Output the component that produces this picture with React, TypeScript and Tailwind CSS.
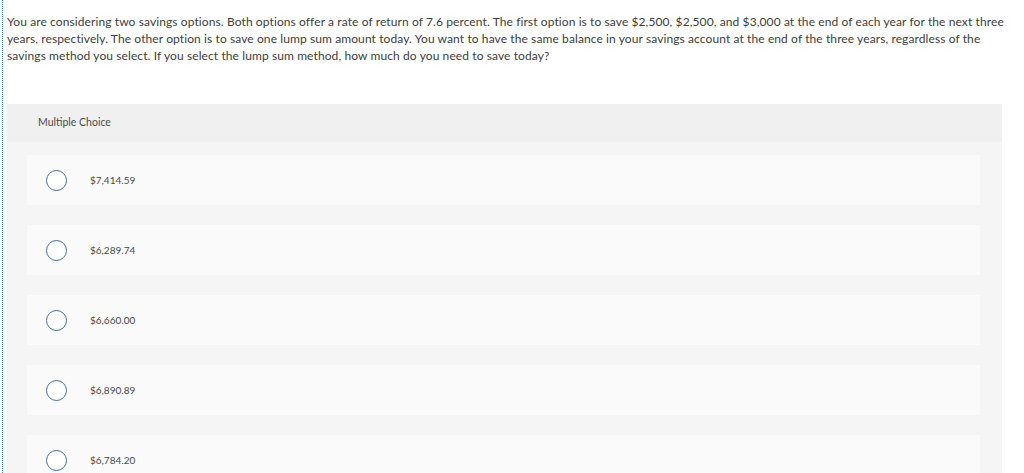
const OPTIONS = ['$7,414.59', '$6,289.74', '$6,660.00', '$6,890.89', '$6,784.20'];

function Radio() {
  return <span className="block h-[21px] w-[21px] shrink-0 rounded-full border-[1.5px] border-[#3f6fa3] bg-white" />;
}

export default function App() {
  return (
    <div className="h-[473px] overflow-hidden bg-white font-['Lato',sans-serif] text-[#3d3d3d]">
      <div className="ml-[2px] min-h-[473px] border-l border-dotted border-[#3b82d6] pl-[4px] pr-[22px]">
        <p className="whitespace-nowrap pt-[13px] text-[12px] leading-[17px] tracking-[0.1px]">
          You are considering two savings options. Both options offer a rate of return of 7.6 percent. The first option is to save $2,500, $2,500, and $3,000 at the end of each year for the next three
          <br />
          years, respectively. The other option is to save one lump sum amount today. You want to have the same balance in your savings account at the end of the three years, regardless of the
          <br />
          savings method you select. If you select the lump sum method, how much do you need to save today?
        </p>

        <div className="mt-[40px] bg-[#f5f5f5]">
          <div className="flex h-[38px] items-center bg-[#f0f0f0] pl-[31px] text-[10.5px] text-[#4a4a4a]">Multiple Choice</div>
          <div className="flex flex-col gap-[20px] pb-[20px] pl-[20px] pr-[22px] pt-[13px]">
            {OPTIONS.map((o) => (
              <div key={o} className="flex h-[50px] items-center bg-[#fafafa] pl-[19px]">
                <Radio />
                <span className="ml-[23px] text-[10px] text-[#4a4a4a]">{o}</span>
              </div>
            ))}
          </div>
        </div>
      </div>
    </div>
  );
}
